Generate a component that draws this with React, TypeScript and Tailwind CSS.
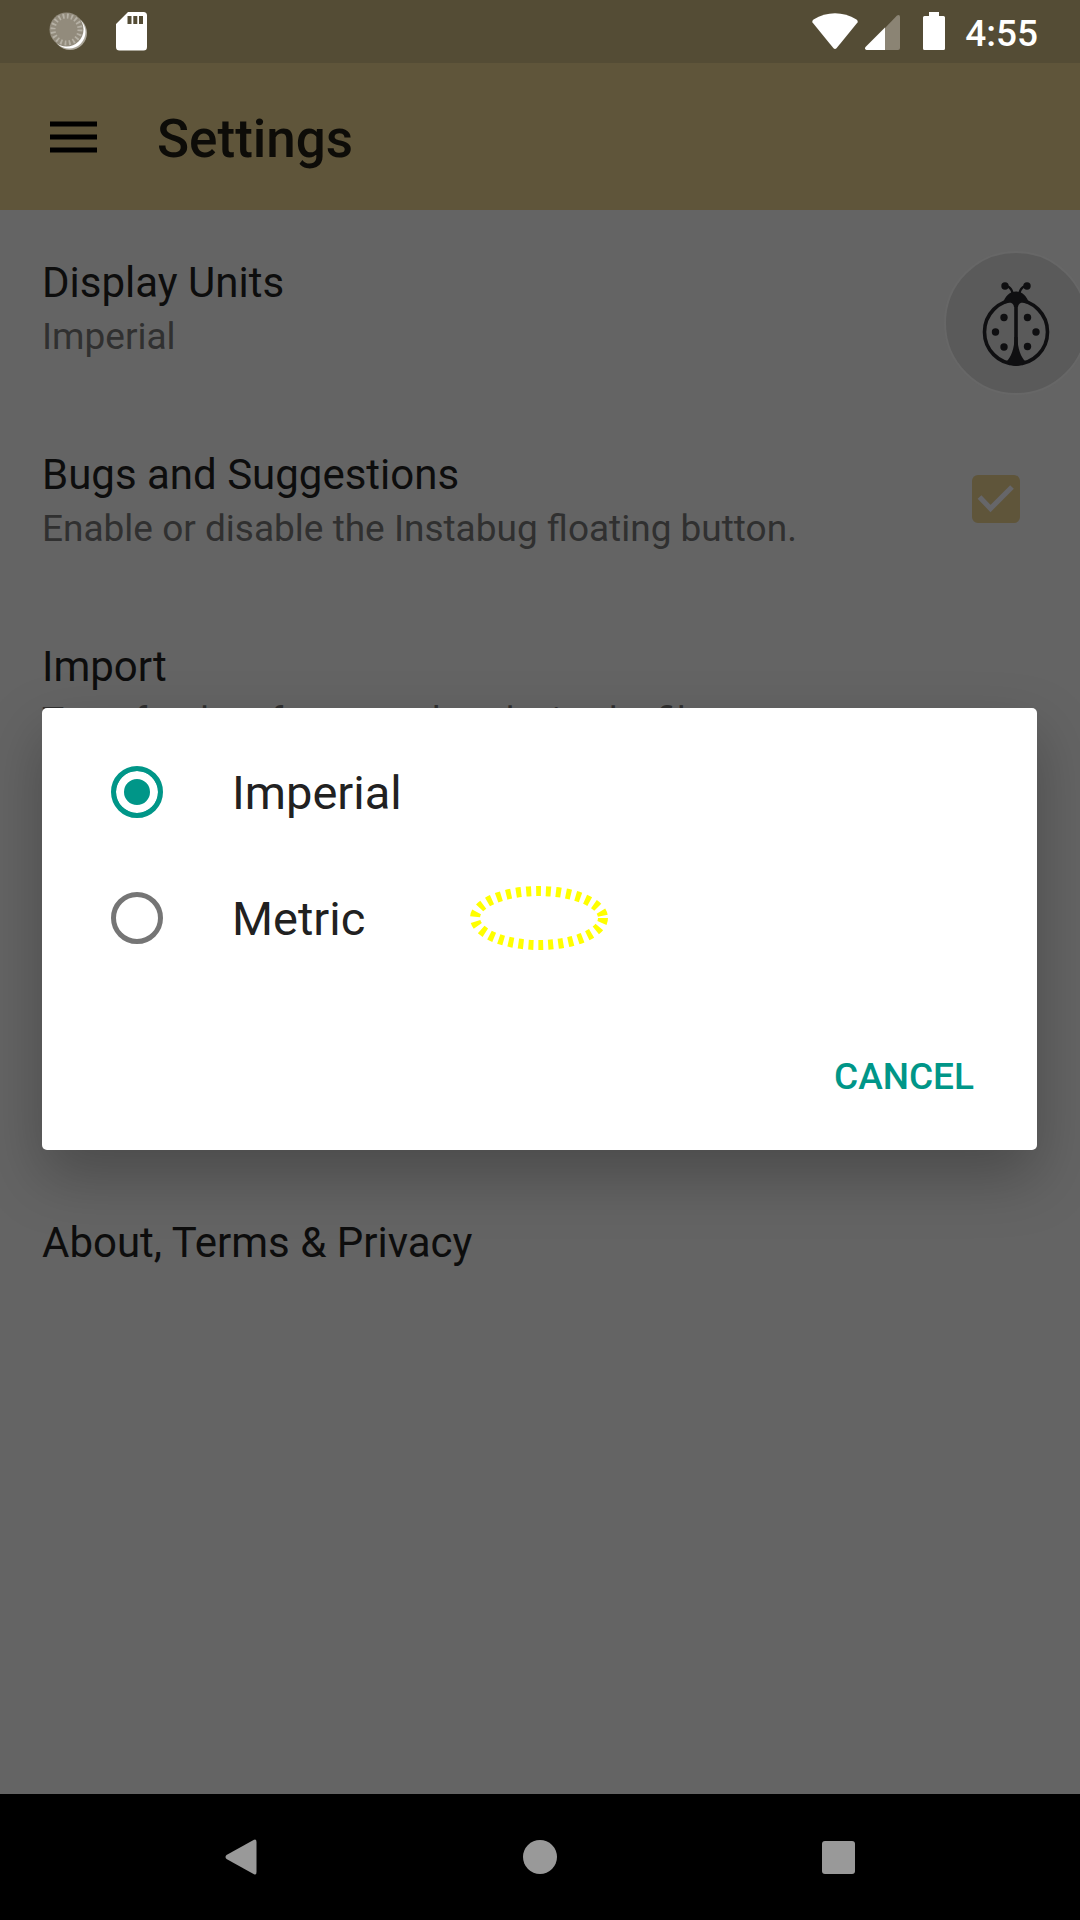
import React, { useState } from "react";

function StatusBar() {
  return (
    <header className="flex h-[63px] shrink-0 items-center justify-between bg-[#544c35] pr-[42px] pl-[42px] text-white">
      <div className="flex items-center gap-4">
        <svg className="h-[63px] w-[49px]" viewBox="42 0 49 63" aria-hidden="true">
          <circle cx="70" cy="33" r="17" fill="#aaa598" />
          <circle cx="69" cy="32" r="16.5" fill="#fff" />
          <circle cx="66.5" cy="29.5" r="17" fill="#928b7c" />
          <circle
            cx="66.5"
            cy="29.5"
            r="13.5"
            fill="none"
            stroke="#b5b0a4"
            strokeWidth="5"
            strokeDasharray="1.8 2.44"
          />
        </svg>
        <svg className="h-[63px] w-[42px]" viewBox="107 0 42 63" aria-hidden="true">
          <path
            fill="#fff"
            fillRule="evenodd"
            d="M128 12h15.500a3.500 3.500 0 0 1 3.500 3.500v31.500a3.500 3.500 0 0 1-3.500 3.500h-24a3.500 3.500 0 0 1-3.500-3.500V24zM127.500 16v8h4v-8zM133.300 16v8h4v-8zM139 16v8h4v-8z"
          />
        </svg>
      </div>
      <div className="flex items-center">
        <svg className="h-[63px] w-[138px]" viewBox="811 0 138 63" aria-hidden="true">
          <path
            fill="#fff"
            d="M812.500 22.500Q811.500 21 813.500 19.500C827 11 843 11 856.500 19.500Q858.500 21 857.500 22.500L836.500 48.200Q835 49.800 833.500 48.200z"
          />
          <path fill="#8b8474" d="M885 28L897 15.500Q900 14 900 17V48Q900 50 898 50H885z" />
          <path fill="#fff" d="M885 27.500V50H866.500Q864 49 865.500 47z" />
          <path
            fill="#fff"
            d="M929 12h10v4h4.500q1.500 0 1.500 1.500V48.500q0 1.500-1.500 1.500h-19q-1.500 0-1.500-1.500V17.500q0-1.500 1.500-1.500h4.500z"
          />
        </svg>
        <time className="pt-1 pl-4 text-[37px] leading-[43px] font-medium">4:55</time>
      </div>
    </header>
  );
}

function AppBar() {
  return (
    <div className="flex h-[147px] shrink-0 items-center bg-[#5f553a] pl-[42px]">
      <button type="button" aria-label="Open menu" className="flex size-16 items-center justify-center">
        <svg className="size-16" viewBox="0 0 64 64" aria-hidden="true">
          <path d="M8 16.500h47v5H8zM8 29.500h47v5H8zM8 42.500h47v5H8z" fill="#000" />
        </svg>
      </button>
      <h1 className="ml-[51px] pt-1 text-[53px] leading-[62px] font-medium text-[#0d0c08]">Settings</h1>
    </div>
  );
}

function PreferenceText({ title, summary }: { title: string; summary?: string }) {
  return (
    <span className="block min-w-0 flex-1 text-left">
      <span className="block truncate text-[42px] leading-14 text-[#0d0d0d]">{title}</span>
      {summary && <span className="block truncate text-[37px] leading-[51px] text-[#303030]">{summary}</span>}
    </span>
  );
}

function InstabugButton() {
  return (
    <button
      type="button"
      aria-label="Report a bug"
      className="absolute top-[41px] -right-2 flex size-36 items-center justify-center rounded-full border-2 border-[#676767] bg-[#5a5a5a]"
    >
      <svg className="h-[90px] w-[72px]" viewBox="0 1 72 90" aria-hidden="true">
        <g fill="none" stroke="#0f0f11">
          <ellipse cx="36" cy="55" rx="31.500" ry="32" strokeWidth="3.600" />
          <path d="M36 22V86" strokeWidth="3.600" />
          <path d="M27 9Q31.500 11 32.500 16M45 9Q40.500 11 39.500 16" strokeWidth="2.400" />
        </g>
        <g fill="#0f0f11">
          <circle cx="25" cy="9" r="3.700" />
          <circle cx="47" cy="9" r="3.700" />
          <path d="M22.500 27C25 19 30 14.500 36 14.500S47 19 49.500 27L43 25.500Q38.500 25.500 38 30H34Q33.500 25.500 29 25.500z" />
          <path d="M34.500 60C34.500 72 31 80 26.500 84.500Q31 89 36 89T45.500 84.500C41 80 37.500 72 37.500 60z" />
          <circle cx="24" cy="40.500" r="3.700" />
          <circle cx="47.500" cy="40.500" r="3.700" />
          <circle cx="15.500" cy="55" r="3.700" />
          <circle cx="56" cy="55" r="3.700" />
          <circle cx="24" cy="70" r="3.700" />
          <circle cx="47.500" cy="69.500" r="3.700" />
        </g>
      </svg>
    </button>
  );
}

function Preferences() {
  return (
    <ul className="flex flex-col">
      <li>
        <button type="button" className="flex h-48 w-full items-start px-[42px] pt-[45px]">
          <PreferenceText title="Display Units" summary="Imperial" />
        </button>
      </li>
      <li>
        <label className="flex h-48 items-start pr-[60px] pl-[42px] pt-[45px]">
          <PreferenceText title="Bugs and Suggestions" summary="Enable or disable the Instabug floating button." />
          <span className="mt-7 grid size-12 shrink-0">
            <input
              type="checkbox"
              defaultChecked
              className="col-start-1 row-start-1 size-12 appearance-none rounded-[6px] bg-[#5f553a]"
            />
            <svg className="pointer-events-none col-start-1 row-start-1 size-12" viewBox="0 0 48 48" aria-hidden="true">
              <path d="M7.500 22L18.500 33.500L40 12" fill="none" stroke="#666669" strokeWidth="5.200" />
            </svg>
          </span>
        </label>
      </li>
      <li>
        <button type="button" className="flex h-48 w-full items-start px-[42px] pt-[45px]">
          <PreferenceText title="Import" summary="Transfer data from another device by file." />
        </button>
      </li>
      <li className="mt-96">
        <button type="button" className="flex h-48 w-full items-start px-[42px] pt-[45px]">
          <PreferenceText title="About, Terms & Privacy" />
        </button>
      </li>
    </ul>
  );
}

function UnitsDialog() {
  const [unit, setUnit] = useState("Imperial");
  return (
    <div
      role="dialog"
      aria-label="Display Units"
      className="relative mr-[43px] ml-[42px] w-full rounded-[5px] bg-white pt-[21px] shadow-[0_26px_60px_rgba(0,0,0,0.26)]"
    >
      {["Imperial", "Metric"].map((name) => (
        <label key={name} className="flex h-[126px] items-center pl-[69px]">
          <input
            type="radio"
            name="unit"
            value={name}
            checked={unit === name}
            onChange={() => setUnit(name)}
            className="size-[52px] shrink-0 appearance-none rounded-full border-[5px] border-[#757575] checked:border-[#009688] checked:bg-[#009688] checked:shadow-[inset_0_0_0_8px_white]"
          />
          <span className="pt-px pl-[69px] text-[47px] leading-[55px] text-[#212121]">{name}</span>
        </label>
      ))}
      <div className="flex justify-end pt-12 pr-[43px] pb-[25px]">
        <button type="button" className="h-24 px-5 text-[37px] leading-[43px] font-medium text-[#009688]">
          CANCEL
        </button>
      </div>
      <svg
        className="pointer-events-none absolute top-[177px] left-1/2 h-[66px] w-[140px] -translate-x-1/2"
        viewBox="0 0 140 66"
        aria-hidden="true"
      >
        <ellipse cx="69" cy="33" rx="64" ry="27" fill="none" stroke="#ff0" strokeWidth="10" strokeDasharray="5 5" />
      </svg>
    </div>
  );
}

function NavigationBar() {
  return (
    <nav className="flex h-[126px] shrink-0 justify-center bg-black">
      <button type="button" aria-label="Back" className="flex w-[298px] items-center justify-center">
        <svg className="size-10" viewBox="0 0 40 40" aria-hidden="true">
          <path d="M4.500 18L32 2.800Q34.500 1.500 34.500 5V35Q34.500 38.500 32 37.200L4.500 22Q2.500 20 4.500 18z" fill="#999" />
        </svg>
      </button>
      <button type="button" aria-label="Home" className="flex w-[298px] items-center justify-center">
        <span className="size-[34px] rounded-full bg-[#999]" />
      </button>
      <button type="button" aria-label="Recent apps" className="flex w-[298px] items-center justify-center">
        <span className="size-[33px] rounded-[3px] bg-[#999]" />
      </button>
    </nav>
  );
}

export default function App() {
  return (
    <div className="flex min-h-screen flex-col overflow-hidden bg-[#646464] font-['Roboto',sans-serif]">
      <StatusBar />
      <div className="relative flex flex-1 flex-col">
        <AppBar />
        <main className="relative flex-1">
          <Preferences />
          <InstabugButton />
        </main>
        <div className="absolute inset-0 flex items-center justify-center">
          <UnitsDialog />
        </div>
      </div>
      <NavigationBar />
    </div>
  );
}
